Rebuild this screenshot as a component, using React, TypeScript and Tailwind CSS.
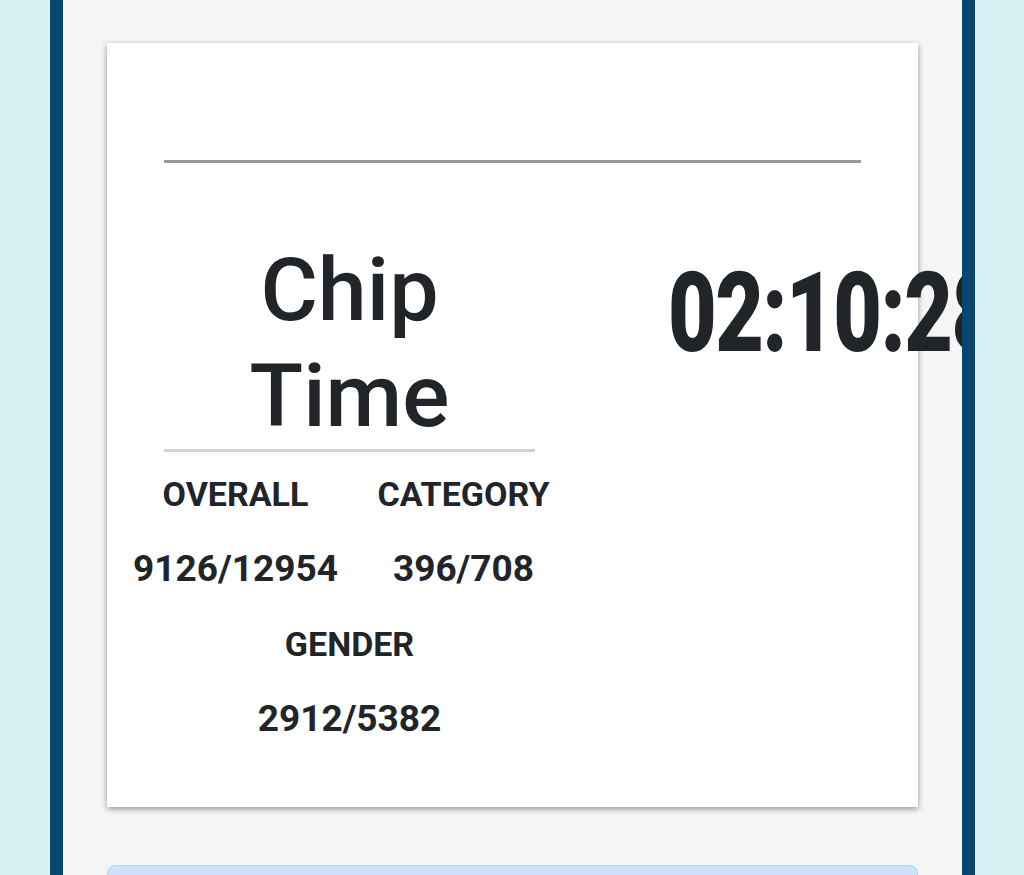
const STATS = [
  { label: "OVERALL", value: "9126/12954" },
  { label: "CATEGORY", value: "396/708" },
];

function Stat({ label, value }: { label: string; value: string }) {
  return (
    <div className="flex w-[228px] shrink-0 flex-col items-center">
      <div className="text-[34px] leading-none font-bold">{label}</div>
      <div className="mt-[39px] text-[37px] leading-none font-bold">{value}</div>
    </div>
  );
}

export default function App() {
  return (
    <div className="min-h-[875px] bg-[#d9f0f5] font-['Roboto',sans-serif] text-[#212529]">
      <div className="ml-[50px] h-[875px] w-[925px] overflow-hidden border-x-[13px] border-[#08466f] bg-[#f5f5f5]">
        <div className="px-[44px] pt-[43px]">
          <div className="bg-white px-[57px] pt-[117px] pb-[70px] shadow-[0_2px_6px_rgba(0,0,0,0.4)]">
            <div className="h-[3px] bg-[#999999]" />
            <div className="flex">
              <div className="w-[371px] shrink-0">
                <h2 className="mt-[74px] text-center text-[88px] leading-[1.2] font-medium">
                  Chip
                  <br />
                  Time
                </h2>
                <div className="mt-px h-[3px] bg-[#d2d2d2]" />
                <div className="mt-[25px] flex justify-center">
                  {STATS.map((s) => (
                    <Stat key={s.label} label={s.label} value={s.value} />
                  ))}
                </div>
                <div className="mt-[40px] flex justify-center">
                  <Stat label="GENDER" value="2912/5382" />
                </div>
              </div>
              <div className="ml-[133px] shrink-0">
                <div className="mt-[94px] origin-left scale-x-[0.75] text-[112px] leading-none font-black tracking-[-2px] whitespace-nowrap">
                  02:10:28
                </div>
              </div>
            </div>
          </div>
          <div className="mt-[58px] h-24 rounded-lg border border-[#b6d4fe] bg-[#cfe2ff]" />
        </div>
      </div>
    </div>
  );
}
